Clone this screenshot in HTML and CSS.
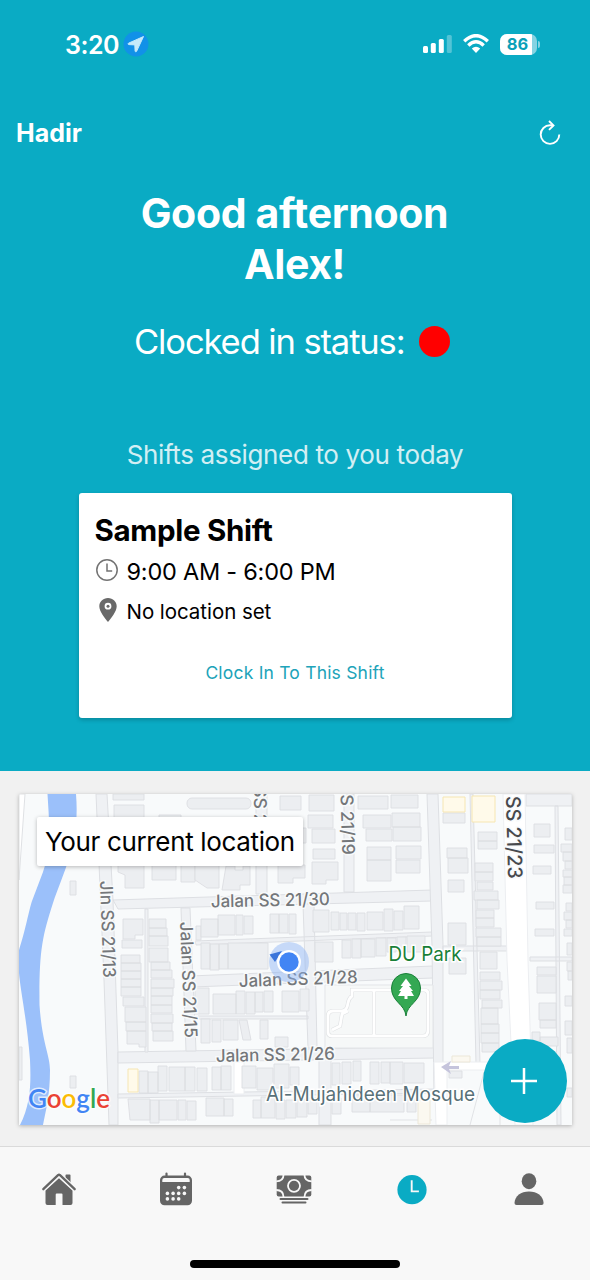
FILE: index.html
```html
<!DOCTYPE html>
<html lang="en">
<head>
<meta charset="utf-8">
<title>Hadir</title>
<link rel="stylesheet" href="styles.css">
</head>
<body>
<main class="hero">
  <div class="status-bar">
    <div class="clock"><span class="time">3:20</span>
      <svg class="loc" viewBox="0 0 26 26"><circle cx="13" cy="13" r="12.5" fill="#1191e8"/><path d="M20.5 5.5 5.5 12.2c-.7.4-.5 1.4.3 1.4l6 .3.3 6.2c.1.8 1.1 1 1.5.2z" fill="#c5eafa" stroke="#c5eafa" stroke-linejoin="round"/></svg>
    </div>
    <div class="signals">
      <svg class="bars" viewBox="0 0 30 20"><g fill="#fff"><rect x="0" y="12" width="5" height="7" rx="1.5"/><rect x="7.8" y="9" width="5" height="10" rx="1.5"/><rect x="15.8" y="5" width="5" height="14" rx="1.5"/><rect x="23.8" y="1" width="5" height="18" rx="1.5" opacity=".3"/></g></svg>
      <svg class="wifi" viewBox="0 0 26 20"><g fill="none" stroke="#fff" stroke-width="3.4"><path d="M1.2 7.2Q13-3.9 24.8 7.2"/><path d="M5.3 11.4Q13 4.2 20.7 11.4"/></g><path d="M8.8 14.6Q13 11 17.2 14.6L13 19z" fill="#fff"/></svg>
      <span class="battery"><span class="level">86</span></span><span class="tip"></span>
    </div>
  </div>
  <header class="title-bar">
    <span class="brand">Hadir</span>
    <svg class="refresh" viewBox="0 0 24 26" fill="none" stroke="#fff" stroke-width="1.9"><path d="M15 5.300H12a9.3 9.3 0 1 0 9.3 9.3"/><path d="M11 1l4.5 4.4-4.5 4.5"/></svg>
  </header>
  <h1 class="greeting">Good afternoon<br>Alex!</h1>
  <div class="state"><span class="state-text">Clocked in status:</span><span class="dot"></span></div>
  <p class="assigned"><span>Shifts assigned to you today</span></p>
  <section class="card">
    <h2 class="shift"><span>Sample Shift</span></h2>
    <div class="row hours">
      <svg class="icon" viewBox="0 0 24 24" fill="none" stroke="#737373" stroke-width="1.5"><circle cx="12" cy="12" r="10.2"/><path d="M12 5.5V13h5.2"/></svg><span>9:00 AM - 6:00 PM</span>
    </div>
    <div class="row place">
      <svg class="icon" viewBox="0 0 24 26"><path fill="#696969" fill-rule="evenodd" d="M13 1c-5 0-8.7 3.7-8.7 8.2C4.300 14.500 10 21 13 25c3-4 8.700-10.500 8.700-15.800C21.700 4.700 18 1 13 1zm0 4.800a3.400 3.400 0 1 1 0 6.800 3.400 3.400 0 0 1 0-6.800z"/><circle cx="13" cy="9.200" r="1.500" fill="#696969"/></svg><span>No location set</span>
    </div>
    <button class="clock-in"><span>Clock In To This Shift</span></button>
  </section>
</main>
<section class="map-section">
  <div class="map">
    <svg class="map-art" viewBox="19 794 553 331">
      <rect x="19" y="794" width="553" height="331" fill="#f8fafb"/>
      <path d="M19 794h6L19 880z" fill="#fff" stroke="#dfe1e4"/>
      <path d="M47.500 794H76C80 842 65 868 53 903 42 937 39 952 39.500 1005 42 1043 50 1055 50 1070 50 1095 46 1110 43 1125H20C31 1104 31 1082 30 1060 27 1020 20 988 19 973V950C25 932 29 910 32 901L43 872C52 846 49 820 47.500 794z" fill="#9bc0fa"/>
      <g fill="#eff1f4" stroke="#dddfe3">
        <path d="M96 794h11l6 106 5 152v73h-9L104 980z"/>
        <path d="M113 900 432 890V901L118 909z"/>
        <path d="M190 976 433 966V978L192 987z"/>
        <path d="M118 1052 435 1047V1058L118 1063z"/>
        <path d="M118 1094 435 1089V1093L118 1098zM145 909h3v143h-3zM181 908h9l6 143h-10zM256 794h11v100h-11zM344 794h10v98h-10zM303 904h11l3 144h-9zM319 1058h12v67h-12zM198 1016h110v3H198zM195 941 432 932v4L196 945z"/>
        <path d="M427 794h11l5 150v151h-9l-2-149zM470 794h3l7 270h-4zM443 946h64v5h-64zM526 794h46v12h-46zM555 806h3l3 319h-4zM530 957h42v4h-42z"/>
      </g>
      <g fill="#fff" stroke="#eceef1">
        <path d="M503 794h22l3 166 5 165h-18l-8-165zM234 1061h10v33h-10zM434 1062h56v8h-43v55h-11z"/>
      </g>
      <g fill="none">
        <path d="M325 985h108v63H325z" stroke="#e3e5e8" fill="#f6f8f8"/>
        <path d="M352 990h72q4 0 4 4v36q0 6-5 6h-91q-4 0-4-4v-16q0-5 5-5h9q5 0 6-8 1-5 4-7zM374 990v46M348 1011l-6 3-2 12-8 4" stroke="#dfe1e3" stroke-width="4"/>
        <path d="M352 990h72q4 0 4 4v36q0 6-5 6h-91q-4 0-4-4v-16q0-5 5-5h9q5 0 6-8 1-5 4-7zM374 990v46M348 1011l-6 3-2 12-8 4" stroke="#fff" stroke-width="2.800"/>
        <path d="M470 1125 484 1072M500 1095v30M390 1120h42" stroke="#e1e3e6"/>
      </g>
      <g fill="#eceef1" stroke="#dcdee2" stroke-width=".9">
        <path d="M113 794h31v6h-31zM114 805h30v16h-30zM118 864h26v24h-19v-13l-7-3zM152 865h24v15h-24zM181 865h14v17h-14zM70 881h6v14h-6zM70 1076h6v12h-6zM159 815h22v6h-22zM19 1047h3v33h-3z"/>
        <rect x="187" y="798" width="64" height="11" rx="5"/>
        <path d="M280 796h21v14h-21zM309 795h25v16h-25zM308 815h25v13h-25zM312 829h23v14h-23zM300 828h6v15h-6zM313 849h22v10h-22zM312 862h26v18h-12v4h-14zM278 865h27v13h-12v5h-15zM195 864h24v24h-12l-12-8zM226 866h9v4h8v-4h7v19h-10v5h-18z"/>
        <path d="M358 796h30v13h-30zM363 815h28v13h-28zM366 829h26v12h-26zM367 847h24v13h-24zM367 860h24v21h-24zM391 795h27v13h-27zM392 813h28v14h-28zM393 827h28v14h-28zM396 846h25v13h-25zM396 860h24v13h-24z"/>
        <path d="M123 919h20v16h-8v4h-12zM122 940h20v8h-20zM121 955h19v8h-19zM121 963h20v8h-20zM121 971h20v8h-20zM121 979h20v8h-20zM121 987h20v9h-20zM123 997h21v9h-21zM125 1007h21v15h-21zM126 1022h20v9h-20zM127 1031h19v16h-7v-3h-12z"/>
        <path d="M149 919h17v9h-17zM149 928h18v8h-18zM149 936h19v10h-19zM149 948h19v14h-19zM151 962h19v8h-19zM151 970h21v8h-21zM151 979h23v9h-23zM151 988h22v8h-22zM151 996h21v9h-21zM151 1005h21v8h-21zM151 1014h22v9h-22zM152 1023h20v8h-20zM153 1031h20v10h-20zM196 926h5v14h-5z"/>
        <path d="M139 1071h9v22h-9zM148 1072h10v21h-10zM158 1066h9v25h-9zM169 1067h16v24h-16zM185 1067h10v24h-10zM197 1068h10v23h-10zM212 1067h9v23h-9zM221 1066h10v24h-10zM128 1099h22v21h-20zM150 1100h9v23h-9zM159 1100h18v20h-18zM178 1100h8v20h-8zM187 1101h9v19h-9zM206 1098h18v18h-18zM224 1099h9v17h-9z"/>
        <path d="M201 919h17v18h-17zM218 915h17v20h-17zM236 915h7v20h-7zM244 916h9v18h-9zM270 914h9v19h-9zM279 914h9v19h-9zM289 914h7v20h-7zM313 910h16v22h-16zM331 912h8v18h-8zM340 913h7v17h-7zM348 913h8v17h-8zM357 913h8v18h-8zM367 912h16v18h-16zM384 909h9v22h-9zM394 911h9v19h-9zM404 906h15v23h-15z"/>
        <path d="M201 943h9v26h-9zM210 944h9v26h-9zM219 944h9v25h-9zM228 943h40v26h-40zM315 942h18v20h-18zM342 940h9v18h-9zM352 939h9v19h-9zM361 939h14v18h-14zM376 938h10v18h-10zM387 938h9v14h-9zM397 937h9v14h-9zM407 936h18v16h-18z"/>
        <path d="M195 988h14v26h-14zM213 994h23v20h-23zM236 991h9v23h-9zM246 992h9v22h-9zM255 992h8v20h-8zM264 991h9v21h-9zM282 991h17v21h-17zM300 989h9v22h-9zM201 1019h9v24h-9zM212 1020h9v22h-9zM223 1020h15v20h-15zM239 1020h8l4 20h-8zM260 1020h8v19h-8zM275 1037h13v10h-13z"/>
        <path d="M242 1066h14v22h-14zM257 1068h16v22h-16zM274 1064h15v24h-15zM290 1067h9v18h-9zM332 1063h8v22h-8zM342 1062h9v22h-9zM353 1061h8v20h-8zM370 1062h9v22h-9zM381 1062h9v21h-9zM390 1062h13v22h-13zM404 1063h20v20h-20zM253 1100h8v18h-8zM261 1097h14v21h-14zM276 1100h9v19h-9zM286 1100h10v18h-10zM297 1099h10v18h-10zM308 1098h9v16h-9zM332 1098h9v16h-9zM352 1095h18v17h-18zM370 1095h34v17h-34zM407 1095h9v17h-9z"/>
        <path d="M443 813h22v10h-22zM447 848h20v10h-20zM448 858h20v15h-20zM448 880h16v12h-16zM448 923h18v22h-18zM449 958h17v16h-17zM478 832h19v9h-19zM478 841h19v8h-19zM475 863h18v9h-18zM475 872h18v9h-18zM477 882h16v8h-16zM474 891h24v9h-24zM477 900h22v9h-22zM476 910h18v8h-18zM476 918h18v9h-18zM476 928h25v9h-25zM477 937h24v9h-24zM480 952h17v17h-17zM480 972h20v8h-20zM480 981h22v9h-22zM480 990h20v9h-20zM482 1000h20v8h-20zM481 1008h17v16h-17zM481 1024h18v9h-18zM481 1033h18v10h-18zM482 1043h17v9h-17zM449 1071h13v7h-13z"/>
        <path d="M534 824h16v13h-16zM534 845h20v8h-20zM533 866h18v8h-18zM536 902h18v7h-18zM535 929h19v7h-19zM537 967h19v8h-19zM537 976h19v17h-19zM539 1003h17v17h-17zM540 1020h16v8h-16zM532 1032h8v9h-8zM540 1037h18v9h-18zM565 828h7v12h-7zM561 844h11v8h-11zM563 852h9v9h-9zM565 861h7v8h-7zM563 870h9v7h-9zM564 877h8v8h-8zM563 885h9v8h-9zM566 903h6v8h-6zM564 912h8v8h-8zM566 920h6v8h-6zM564 929h8v7h-8zM567 943h5v12h-5zM567 962h5v9h-5zM568 971h4v9h-4zM565 996h7v10h-7zM565 1021h7v14h-7zM567 1038h5v15h-5zM567 1088h5v9h-5z"/>
      </g>
      <g fill="#fffaea" stroke="#f6e6b2"><path d="M443 797h22v15h-22zM472 796h23v26h-23zM128 1069h10v23h-10z"/><path d="M452 1056h18v6h-18zM418 1100h12v24h-12z" fill="#fbf8f0" stroke="#ece7d8"/></g>
      <path d="m441 1067 10-6-2 5h10v3h-10l2 5z" fill="#c5c4dc"/>
      <g class="road-label">
        <text x="211" y="907.500" textLength="119" lengthAdjust="spacingAndGlyphs" transform="rotate(-1.200 211 907)">Jalan SS 21/30</text>
        <text x="239" y="987" textLength="119" lengthAdjust="spacingAndGlyphs" transform="rotate(-2 239 987)">Jalan SS 21/28</text>
        <text x="216" y="1062" textLength="119" lengthAdjust="spacingAndGlyphs" transform="rotate(-1.200 216 1062)">Jalan SS 21/26</text>
        <text x="100" y="881" textLength="97" lengthAdjust="spacingAndGlyphs" transform="rotate(88 100 881)">Jln SS 21/13</text>
        <text x="180" y="922" textLength="116" lengthAdjust="spacingAndGlyphs" transform="rotate(87.500 180 922)">Jalan SS 21/15</text>
        <text x="340" y="783" textLength="72" lengthAdjust="spacingAndGlyphs" transform="rotate(88 340 783)">SS 21/19</text>
        <text x="254" y="786" textLength="70" lengthAdjust="spacingAndGlyphs" transform="rotate(89.500 254 786)">SS 21/17</text>
        <text class="major" x="506" y="796" textLength="83" lengthAdjust="spacingAndGlyphs" transform="rotate(88.500 506 796)">SS 21/23</text>
      </g>
      <g class="poi"><text class="park" x="388.500" y="961" textLength="73" lengthAdjust="spacingAndGlyphs">DU Park</text>
      <text class="mosque" x="266" y="1101" textLength="209" lengthAdjust="spacingAndGlyphs">Al-Mujahideen Mosque</text></g>
      <path d="M406 1016c-1-12-14.500-14-14.500-28a14.500 14.500 0 0 1 29 0c0 14-13.500 16-14.500 28z" fill="#34a853" stroke="#188038"/>
      <path d="M406 978.500 411.500 986H409l4 5h-2l3 5h-6.500v3h-3v-3H398l3-5h-2l4-5h-2.500z" fill="#fff"/>
      <circle cx="289" cy="962" r="20" fill="#8ab2f4" opacity=".45"/>
      <path d="M269.500 954.500 282 951l-7 11z" fill="#3b75da"/><circle cx="289" cy="962" r="12" fill="#fff"/><circle cx="289" cy="962" r="9.700" fill="#4285f4"/>
      <text class="google" x="28" y="1107.500" textLength="82" lengthAdjust="spacingAndGlyphs"><tspan fill="#4285f4">G</tspan><tspan fill="#ea4335">o</tspan><tspan fill="#fbbc05">o</tspan><tspan fill="#4285f4">g</tspan><tspan fill="#34a853">l</tspan><tspan fill="#ea4335">e</tspan></text>
    </svg>
    <div class="map-title"><span>Your current location</span></div>
  </div>
  <button class="fab" aria-label="Add"><svg viewBox="0 0 28 28" stroke="#fff" stroke-width="2.500"><path d="M14 1v26M1 14h26"/></svg></button>
</section>
<nav class="tabs">
  <div class="tab-row">
    <svg class="tab" viewBox="0 0 36 36" fill="#656565"><path d="M24.500 3.300q0-.8.800-.8h3.400q.8 0 .8.800v9.500l-5-4.800z"/><path d="M18 6.300 31.500 18.600V31q0 2-2 2h-8V22.500q0-1-1-1h-4.800q-1 0-1 1V33H6.500q-2 0-2-2V18.600z"/><path d="M2.300 17.200 17 3.200q1-.9 2 0l14.700 14" fill="none" stroke="#f8f8f8" stroke-width="4.500"/><path d="M2.300 17.200 17 3.200q1-.9 2 0l14.700 14" fill="none" stroke="#656565" stroke-width="2.300" stroke-linecap="round"/></svg>
    <svg class="tab" viewBox="0 0 36 36"><path d="M8.500 1.500v4M27 1.500v4" stroke="#656565" stroke-width="2.200" stroke-linecap="round"/><rect x="2" y="3.600" width="32" height="29.600" rx="4.500" fill="#656565"/><path d="M4.300 10V8q0-2 2-2h23.400q2 0 2 2v2z" fill="#f8f8f8"/><g fill="#f8f8f8"><circle cx="20.700" cy="15.600" r="1.800"/><circle cx="26.400" cy="15.600" r="1.800"/><circle cx="9.400" cy="21.400" r="1.800"/><circle cx="15.100" cy="21.400" r="1.800"/><circle cx="20.700" cy="21.400" r="1.800"/><circle cx="26.400" cy="21.400" r="1.800"/><circle cx="9.400" cy="26.900" r="1.800"/><circle cx="15.100" cy="26.900" r="1.800"/><circle cx="20.700" cy="26.900" r="1.800"/></g></svg>
    <svg class="tab" viewBox="0 0 36 36"><rect x=".7" y="3.500" width="34.600" height="21" rx="2" fill="#656565"/><g fill="none" stroke="#f8f8f8" stroke-width="1.800"><circle cx="18" cy="13.800" r="6"/><path d="M7.500 3q0 6.300-7.300 6.300M28.500 3q0 6.300 7.300 6.300M.2 18q7.300 0 7.300 7M35.800 18q-7.300 0-7.300 7"/></g><path d="M4.500 27h27M6.500 30.500h23" stroke="#656565" stroke-width="2" stroke-linecap="round"/></svg>
    <svg class="tab" viewBox="0 0 36 36"><circle cx="18" cy="17.700" r="14.600" fill="#0aabc4"/><path d="M17.700 8.200v11.200h7.200" fill="none" stroke="#f8f8f8" stroke-width="1.900"/></svg>
    <svg class="tab" viewBox="0 0 36 36" fill="#656565"><ellipse cx="18" cy="9.200" rx="7.300" ry="8"/><path d="M3.500 31C3.800 24 10 19.600 18 19.600S32.200 24 32.600 31q0 2-2 2H5.500q-2 0-2-2z"/></svg>
  </div>
  <div class="home-bar"></div>
</nav>
</body>
</html>
```

FILE: styles.css
```css
* { box-sizing: border-box; }
body { margin: 0; width: 590px; height: 1280px; overflow: hidden; background: #f1f1f1; color: #000; font-family: Inter, "Noto Sans", sans-serif; }
svg { display: block; }
h1, h2, p { margin: 0; font: inherit; }
button { border: 0; padding: 0; font-family: inherit; }
.hero { height: 771px; background: #0aabc4; color: #fff; display: flex; flex-direction: column; }
.status-bar { height: 88px; padding: 0 50px 0 65px; display: flex; justify-content: space-between; align-items: center; }
.clock, .signals { display: flex; align-items: center; }
.time { font-size: 25px; font-weight: 600; letter-spacing: -.5px; line-height: 30px; padding-top: 1px; }
.loc { width: 26px; height: 26px; margin-left: 4px; }
.bars { width: 30px; height: 20px; margin-right: 10px; }
.wifi { width: 26px; height: 20px; margin-right: 11px; }
.battery { width: 37px; height: 21px; border-radius: 7px; overflow: hidden; background: #85d3e2; }
.level { display: block; width: 32px; height: 21px; padding-left: 3px; background: #fff; color: #0aa0b8; font-size: 16.500px; line-height: 21px; font-weight: 700; text-align: center; }
.tip { width: 2px; height: 7px; margin-left: 1px; border-radius: 0 3px 3px 0; background: #85d3e2; }
.title-bar { height: 88px; padding: 1px 28px 0 16px; display: flex; justify-content: space-between; align-items: center; }
.brand { font-size: 25px; font-weight: 700; line-height: 30px; letter-spacing: 0; }
.refresh { width: 24px; height: 26px; }
.greeting { margin-top: 12px; padding-right: 1px; text-align: center; font-size: 41px; line-height: 51px; font-weight: 700; letter-spacing: -.35px; }
.state { height: 50px; margin-top: 26px; padding-left: 134px; display: flex; align-items: center; }
.state-text { width: 285px; font-size: 34.500px; font-weight: 400; letter-spacing: -1.100px; white-space: nowrap; }
.dot { width: 31px; height: 31px; border-radius: 50%; background: #f00; }
.assigned { height: 34px; margin-top: 72px; text-align: center; font-size: 26px; line-height: 34px; font-weight: 400; letter-spacing: -.350px; opacity: .82; }
.card { width: 433px; height: 225px; margin: 21px 0 0 78.500px; padding: 17px 16px; border-radius: 3px; background: #fff; color: #000; box-shadow: 0 2px 4px #0003; }
.shift { height: 41px; font-size: 29.500px; line-height: 41px; font-weight: 700; letter-spacing: -.300px; }
.row { height: 40px; display: flex; align-items: center; gap: 8px; white-space: nowrap; }
.icon { width: 24px; height: 26px; margin-bottom: 3px; }
.hours { font-size: 23.500px; letter-spacing: -.230px; }
.place { font-size: 20.500px; letter-spacing: -.05px; }
.clock-in { display: block; width: 100%; height: 40px; margin-top: 21px; background: none; color: #20a3b9; font-size: 17.500px; letter-spacing: .2px; }
.map-section { position: relative; height: 375px; padding: 23px 19px; }
.map { position: relative; width: 553px; height: 331px; box-shadow: 0 1px 4px #0004; overflow: hidden; }
.map-art { width: 553px; height: 331px; font-family: Inter, "Noto Sans", sans-serif; }
.map-title { position: absolute; left: 18px; top: 23px; width: 266px; height: 49px; padding-left: 8px; background: #fff; box-shadow: 0 1px 4px #0004; font-size: 26px; letter-spacing: -.350px; line-height: 49px; white-space: nowrap; border-radius: 2px; }
.road-label { fill: #74777a; font-size: 17.500px; font-weight: 500; stroke: #f8fafb; stroke-width: 3px; paint-order: stroke; }
.major { fill: #47494d; font-size: 20px; }
.poi { font-size: 20px; stroke: #fff; stroke-width: 3px; paint-order: stroke; }
.park { fill: #188038; }
.mosque { fill: #587078; }
.google { font-family: Lato, sans-serif; font-weight: 600; font-size: 27px; stroke: #ffffffb0; stroke-width: 3px; paint-order: stroke; }
.fab { position: absolute; left: 483px; top: 268px; width: 84px; height: 84px; border-radius: 50%; background: #0aabc4; display: grid; place-items: center; }
.fab svg { width: 28px; height: 28px; margin-right: 2px; }
.tabs { height: 134px; background: #f8f8f8; border-top: 1px solid #dadada; }
.tab-row { height: 83px; padding: 2px 2px 0 0; display: grid; grid-template-columns: repeat(5, 1fr); justify-items: center; align-items: center; }
.tab { width: 36px; height: 36px; }
.home-bar { width: 210px; height: 8px; margin: 30px auto 0; border-radius: 4px; background: #000; }
```
